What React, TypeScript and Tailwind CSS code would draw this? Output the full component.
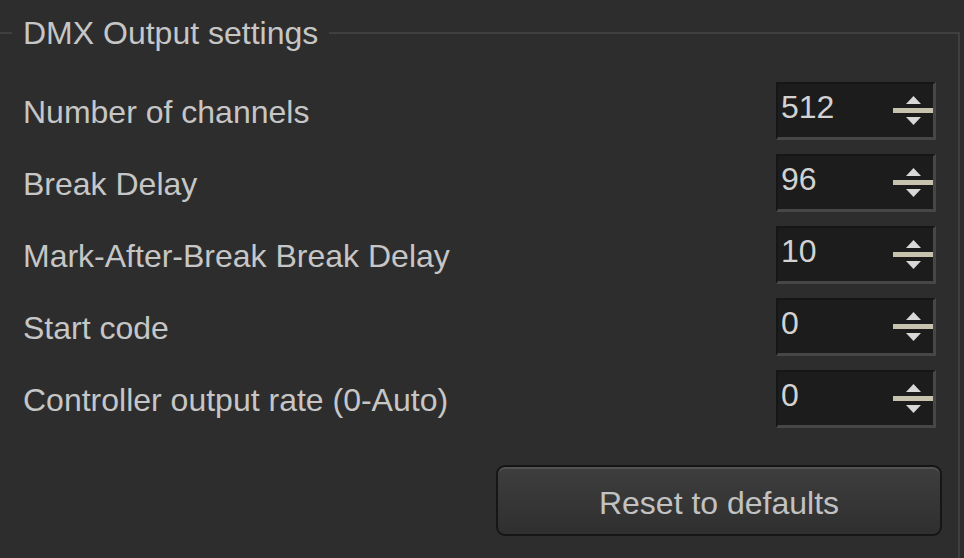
const rows = [
  { label: "Number of channels", value: "512" },
  { label: "Break Delay", value: "96" },
  { label: "Mark-After-Break Break Delay", value: "10" },
  { label: "Start code", value: "0" },
  { label: "Controller output rate (0-Auto)", value: "0" },
];

function SpinBox({ value }: { value: string }) {
  return (
    <div className="flex h-[58px] w-[160px] items-center border-t-2 border-l-2 border-b-[3px] border-r-[3px] border-t-[#161616] border-l-[#161616] border-b-[#474747] border-r-[#474747] bg-[#1c1c1c]">
      <span className="flex-1 pl-[3px] pb-[8px] text-[32px] leading-none text-[#d2d2d2]">{value}</span>
      <div className="flex h-full w-[40px] flex-col items-center justify-center gap-[4px]">
        <svg width="15" height="8" viewBox="0 0 15 8">
          <path d="M7.5 0 L15 8 L0 8 Z" fill="#d8d8d8" />
        </svg>
        <div className="h-[5px] w-[40px] bg-[#c6c2ae]" />
        <svg width="15" height="8" viewBox="0 0 15 8">
          <path d="M0 0 L15 0 L7.5 8 Z" fill="#d8d8d8" />
        </svg>
      </div>
    </div>
  );
}

export default function App() {
  return (
    <div
      className="h-[558px] w-[964px] overflow-hidden bg-[#2d2d2d] pt-[16px]"
      style={{ fontFamily: '"Liberation Sans", Arial, sans-serif' }}
    >
      <fieldset className="ml-[-2px] mr-[4px] h-[600px] border-t-2 border-r-2 border-l-0 border-b-0 border-[#3f3f3f] pl-[14px] pr-[22px]">
        <legend className="px-[11px] text-[32px] leading-[34px] text-[#c6c6c6]">DMX Output settings</legend>
        <div className="mt-[32px] flex flex-col gap-[14px]">
          {rows.map((r) => (
            <div key={r.label} className="flex items-center justify-between">
              <span className="pt-[2px] pl-[11px] text-[32px] leading-none text-[#c6c6c6]">{r.label}</span>
              <SpinBox value={r.value} />
            </div>
          ))}
        </div>
        <div className="mt-[37px] flex justify-end">
          <button className="mr-[-6px] flex h-[71px] w-[446px] items-center justify-center rounded-[9px] border-2 border-[#161616] bg-gradient-to-b from-[#3e3e3e] to-[#2f2f2f] pt-[4px] text-[32px] text-[#c2c2c2] shadow-[inset_0_2px_0_#525252]">
            Reset to defaults
          </button>
        </div>
      </fieldset>
    </div>
  );
}
